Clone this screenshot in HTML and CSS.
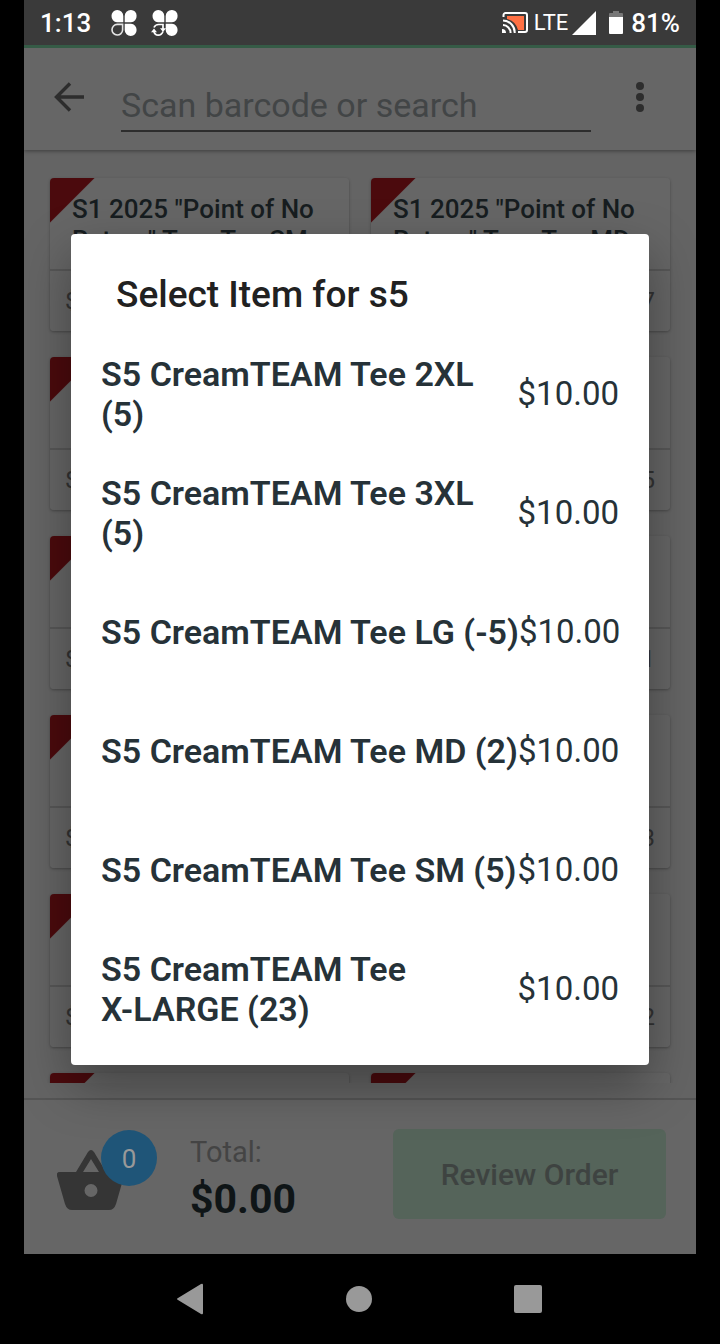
FILE: index.html
```html
<!DOCTYPE html>
<html lang="en">
<head>
  <meta charset="UTF-8" />
  <meta name="viewport" content="width=device-width, initial-scale=1" />
  <title>Select Item</title>
  <link rel="stylesheet" href="styles.css">
</head>
<body>

  <div class="status-bar">
    <span class="clock">1:13</span>
    <svg class="clover" width="28" height="28" viewBox="0 0 28 28">
      <path fill="#fff" d="M13.3 13.2H7A6 6 0 0 1 1.5 6.8 5.6 5.6 0 0 1 7.3 1 6 6 0 0 1 13.3 7zM14.7 13.2H21a6 6 0 0 0 5.6-6.4A5.6 5.6 0 0 0 20.7 1a6 6 0 0 0-6 6zM14.7 14.7H21a6 6 0 0 1 5.6 6.2 5.8 5.8 0 0 1-5.8 6 6 6 0 0 1-6.1-6z"/>
      <path fill="none" stroke="#e4e4e4" stroke-width="1.6" d="M12.6 15.4H7.2a5.3 5.3 0 1 0 5.4 5.6z"/>
    </svg>
    <svg class="clover" width="28" height="28" viewBox="0 0 28 28">
      <path fill="#fff" d="M13.3 13.2H7A6 6 0 0 1 1.5 6.8 5.6 5.6 0 0 1 7.3 1 6 6 0 0 1 13.3 7zM14.7 13.2H21a6 6 0 0 0 5.6-6.4A5.6 5.6 0 0 0 20.7 1a6 6 0 0 0-6 6zM14.7 14.7H21a6 6 0 0 1 5.6 6.2 5.8 5.8 0 0 1-5.8 6 6 6 0 0 1-6.1-6z"/>
      <path fill="none" stroke="#fff" stroke-width="1.7" d="M3 18.5c1-2.300 2.600-3 4.600-3H12V20M12 22.500c-1 2.600-2.700 3.700-4.800 3.700-2.200 0-3.700-1.500-4.300-3.700"/>
      <path fill="#fff" d="M9 19.2h6L12 23zM0 23.2h6L3 19.4z"/>
    </svg>
    <span class="spacer"></span>
    <svg class="cast" width="27" height="24" viewBox="0 0 27 24">
      <path fill="#ff7043" d="M5 5h17v14h-6A15 15 0 0 0 5 8z"/>
      <path fill="none" stroke="#fff" stroke-width="2" d="M1.500 6V4a2 2 0 0 1 2-2H23a2 2 0 0 1 2 2v15a2 2 0 0 1-2 2h-7M1 9.500A12 12 0 0 1 12.700 22M1 14a8 8 0 0 1 7.600 8"/>
      <path fill="#fff" d="M0 18a4 4 0 0 1 4 4H0z"/>
    </svg>
    <span class="network">LTE</span>
    <svg class="signal" width="24" height="24" viewBox="0 0 24 24"><path fill="#fff" d="M0 24 24 0v24z"/></svg>
    <svg class="battery" width="14" height="24" viewBox="0 0 14 24">
      <path fill="#777" d="M4 0h6v2h3a1 1 0 0 1 1 1v4H0V3a1 1 0 0 1 1-1h3z"/>
      <path fill="#fff" d="M0 6h14v16a1 1 0 0 1-1 1H1a1 1 0 0 1-1-1z"/>
    </svg>
    <span class="percent">81%</span>
  </div>

  <div class="app">
    <header class="toolbar">
      <button class="icon-button" aria-label="Back">
        <svg width="30" height="30" viewBox="0 0 30 30"><path fill="none" stroke="#2d2d2d" stroke-width="3.4" d="M30 15H2.500M16 1.500 2.500 15 16 28.500"/></svg>
      </button>
      <input class="search" type="text" placeholder="Scan barcode or search" aria-label="Scan barcode or search" />
      <button class="icon-button" aria-label="More options">
        <svg width="8" height="30" viewBox="0 0 8 30" fill="#2d2d2d"><circle cx="4" cy="4" r="4"/><circle cx="4" cy="15" r="4"/><circle cx="4" cy="26" r="4"/></svg>
      </button>
    </header>

    <main class="products">
      <article class="card"><h2>S1 2025 "Point of No Return" Tour Tee SM</h2><p>$</p></article>
      <article class="card"><h2>S1 2025 "Point of No Return" Tour Tee MD</h2><p class="count">7</p></article>
      <article class="card"><h2></h2><p>$</p></article>
      <article class="card"><h2></h2><p class="count">5</p></article>
      <article class="card"><h2></h2><p>$</p></article>
      <article class="card"><h2></h2><p class="count">1</p></article>
      <article class="card"><h2></h2><p>$</p></article>
      <article class="card"><h2></h2><p class="count">3</p></article>
      <article class="card"><h2></h2><p>$</p></article>
      <article class="card"><h2></h2><p class="count">2</p></article>
      <article class="card"><h2></h2></article>
      <article class="card"><h2></h2></article>
    </main>

    <footer class="order-bar">
      <div class="basket">
        <svg width="68" height="60" viewBox="0 0 68 60">
          <path fill="#353535" fill-rule="evenodd" d="M3 22h16L31 2q3-4 6 0l12 20h15q4 0 3 4l-8 28q-2 6-7 6H15q-5 0-7-6L0 26q-1-4 3-4zM26 22h16L34 9zM34 34a6.500 6.500 0 1 0 0 13 6.500 6.500 0 0 0 0-13z"/>
        </svg>
        <span class="badge">0</span>
      </div>
      <div class="total">
        <span class="total-label">Total:</span>
        <strong class="total-amount">$0.00</strong>
      </div>
      <button class="review" disabled>Review Order</button>
    </footer>

    <div class="overlay">
      <section class="dialog" role="dialog" aria-labelledby="dialogTitle">
        <h1 id="dialogTitle">Select Item for s5</h1>
        <button class="item"><span class="name">S5 CreamTEAM Tee 2XL<br>(5)</span><span class="price">$10.00</span></button>
        <button class="item"><span class="name">S5 CreamTEAM Tee 3XL<br>(5)</span><span class="price">$10.00</span></button>
        <button class="item"><span class="name">S5 CreamTEAM Tee LG (-5)</span><span class="price">$10.00</span></button>
        <button class="item"><span class="name">S5 CreamTEAM Tee MD (2)</span><span class="price">$10.00</span></button>
        <button class="item"><span class="name">S5 CreamTEAM Tee SM (5)</span><span class="price">$10.00</span></button>
        <button class="item"><span class="name">S5 CreamTEAM Tee<br>X-LARGE (23)</span><span class="price">$10.00</span></button>
      </section>
    </div>
  </div>

  <nav class="nav-bar">
    <button aria-label="Back"><svg width="28" height="32" viewBox="0 0 28 32"><path fill="#999" d="M25 1q2-1 2 1v28q0 2-2 1L2 17q-2-1 0-2z"/></svg></button>
    <button aria-label="Home"><svg width="28" height="28" viewBox="0 0 28 28"><circle cx="14" cy="14" r="13" fill="#999"/></svg></button>
    <button aria-label="Recent apps"><svg width="28" height="28" viewBox="0 0 28 28"><rect width="28" height="28" rx="2" fill="#999"/></svg></button>
  </nav>

</body>
</html>
```
FILE: styles.css
```css
* {
  box-sizing: border-box;
}

body {
  margin: 0;
  padding: 0 24px;
  height: 100vh;
  display: flex;
  flex-direction: column;
  background: #000;
  font-family: Roboto, sans-serif;
}

button {
  border: none;
  padding: 0;
  background: none;
  font-family: inherit;
}

svg {
  display: block;
  flex: none;
}

.status-bar {
  height: 48px;
  display: flex;
  align-items: center;
  padding: 0 16px;
  background: #3a3a3a;
  border-bottom: 3px solid #355b46;
  color: #fff;
  font-size: 26px;
  font-weight: 500;
}

.clock {
  margin-right: 19px;
}

.clover {
  margin-right: 13px;
}

.spacer {
  flex: 1;
}

.network {
  margin: 0 4px 0 5px;
  font-size: 22px;
  font-weight: 400;
}

.battery {
  margin: 0 8px 0 13px;
}

.app {
  flex: 1;
  min-height: 0;
  display: flex;
  flex-direction: column;
  position: relative;
  overflow: hidden;
  background: #646464;
}

.toolbar {
  height: 102px;
  flex: none;
  display: flex;
  align-items: flex-start;
  padding: 0 24px 0 30px;
  background: #666;
  box-shadow: 0 1px 4px rgba(0, 0, 0, 0.4);
}

.icon-button {
  width: 64px;
  height: 98px;
  display: flex;
  align-items: center;
}

.icon-button:last-child {
  justify-content: center;
}

.search {
  flex: 1;
  min-width: 0;
  height: 56px;
  margin: 28px 17px 0 3px;
  padding: 4px 0 0;
  border: none;
  border-bottom: 2px solid #2d2d2d;
  background: none;
  color: #222;
  font-family: inherit;
  font-size: 34px;
}

.search::placeholder {
  color: #424546;
  opacity: 1;
}

.products {
  flex: 1;
  min-height: 0;
  overflow: hidden;
  display: grid;
  grid-template-columns: 1fr 1fr;
  grid-auto-rows: 153px;
  gap: 26px 22px;
  margin-bottom: 15px;
  padding: 28px 26px 0;
}

.card {
  border-radius: 4px;
  background: linear-gradient(135deg, #4b0a0d 31px, #666 32px);
  box-shadow: 0 1px 3px rgba(0, 0, 0, 0.3);
  color: #171d20;
}

.card h2 {
  height: 93px;
  margin: 0;
  padding: 16px 22px;
  border-bottom: 2px solid #575757;
  font-size: 26px;
  line-height: 31px;
  font-weight: 500;
}

.card p {
  margin: 0;
  padding: 0 15px;
  color: #333;
  font-size: 24px;
  line-height: 60px;
}

.card .count {
  text-align: right;
}

.order-bar {
  height: 156px;
  flex: none;
  display: flex;
  align-items: center;
  padding: 0 30px 6px 33px;
  border-top: 2px solid #555;
  background: #666;
}

.basket {
  position: relative;
  width: 100px;
  padding-top: 12px;
}

.badge {
  position: absolute;
  top: -8px;
  right: 0;
  width: 56px;
  height: 56px;
  border-radius: 50%;
  background: #1f5578;
  color: #999;
  font-size: 26px;
  line-height: 58px;
  text-align: center;
}

.total {
  flex: 1;
  display: flex;
  flex-direction: column;
  padding: 5px 0 0 33px;
}

.total-label {
  color: #444;
  font-size: 29px;
  line-height: 44px;
}

.total-amount {
  color: #0f1517;
  font-size: 41px;
  line-height: 50px;
}

.review {
  width: 273px;
  height: 90px;
  border-radius: 6px;
  background: #55645a;
  color: #3e4341;
  font-size: 30px;
  font-weight: 500;
}

.overlay {
  position: absolute;
  inset: 0;
  display: flex;
  align-items: center;
  justify-content: center;
  padding-bottom: 4px;
}

.dialog {
  width: calc(100% - 94px);
  padding: 36px 0 16px;
  border-radius: 4px;
  background: #fff;
  box-shadow: 0 20px 50px rgba(0, 0, 0, 0.35);
}

.dialog h1 {
  margin: 0 45px 15px;
  color: #212121;
  font-size: 37px;
  line-height: 50px;
  font-weight: 500;
}

.item {
  width: 100%;
  height: 119px;
  display: flex;
  align-items: center;
  justify-content: space-between;
  padding: 0 30px;
  color: #263238;
  font-size: 33px;
  line-height: 40px;
  text-align: left;
  white-space: nowrap;
}

.name {
  font-size: 34px;
  font-weight: 600;
}

.nav-bar {
  height: 90px;
  flex: none;
  display: flex;
  align-items: center;
  justify-content: space-between;
  padding: 0 154px 0 152px;
}
```
